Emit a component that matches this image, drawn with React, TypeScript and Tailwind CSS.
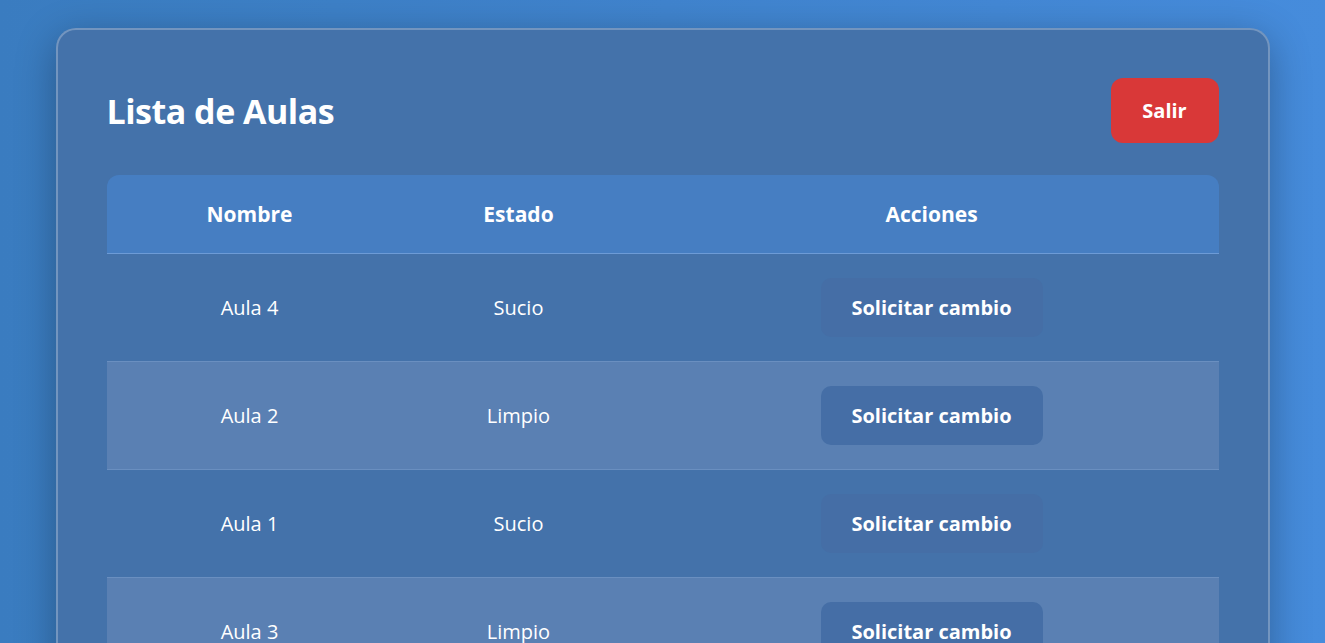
const aulas = [
  { id: 4, nombre: "Aula 4", estado: "Sucio" },
  { id: 2, nombre: "Aula 2", estado: "Limpio" },
  { id: 1, nombre: "Aula 1", estado: "Sucio" },
  { id: 3, nombre: "Aula 3", estado: "Limpio" },
];

const App = () => {
  return (
    <div className="min-h-screen w-full overflow-hidden bg-gradient-to-r from-[#3a7cc0] to-[#468cdc] pt-7 font-['Open_Sans',sans-serif] text-white">
      <div className="mx-auto w-[1214px] rounded-[20px] border-2 border-white/25 bg-[#4472aa] px-[49px] pt-[48px] pb-10 shadow-[0_10px_40px_rgba(0,0,0,0.3)]">
        <div className="flex items-center justify-between">
          <h1 className="text-[34px] font-bold leading-none tracking-[-0.5px]">Lista de Aulas</h1>
          <button className="h-[65px] w-[108px] rounded-[12px] bg-[#d93838] text-[20px] font-bold">
            Salir
          </button>
        </div>
        <table className="mt-8 w-full border-collapse">
          <thead>
            <tr className="bg-[#467ec2]">
              <th className="h-[78px] w-[286px] rounded-tl-[12px] border-b border-[#6d9bd6] pt-[2px] text-[21px] font-bold">
                Nombre
              </th>
              <th className="w-[252px] border-b border-[#6d9bd6] pt-[2px] text-[21px] font-bold">Estado</th>
              <th className="rounded-tr-[12px] border-b border-[#6d9bd6] pt-[2px] text-[21px] font-bold">
                Acciones
              </th>
            </tr>
          </thead>
          <tbody>
            {aulas.map((aula, i) => (
              <tr
                key={aula.id}
                className={`${i % 2 === 1 ? "bg-[#5a80b3]" : "bg-[#4472aa]"} border-b border-[#6a8fc0]`}
              >
                <td className="h-[108px] pt-[2px] text-center text-[20px]">{aula.nombre}</td>
                <td className="pt-[2px] text-center text-[20px]">{aula.estado}</td>
                <td className="text-center">
                  <button className="h-[59px] w-[222px] rounded-[10px] bg-[#456ea6] pt-[2px] text-[20px] font-bold">
                    Solicitar cambio
                  </button>
                </td>
              </tr>
            ))}
          </tbody>
        </table>
      </div>
    </div>
  );
};

export default App;
